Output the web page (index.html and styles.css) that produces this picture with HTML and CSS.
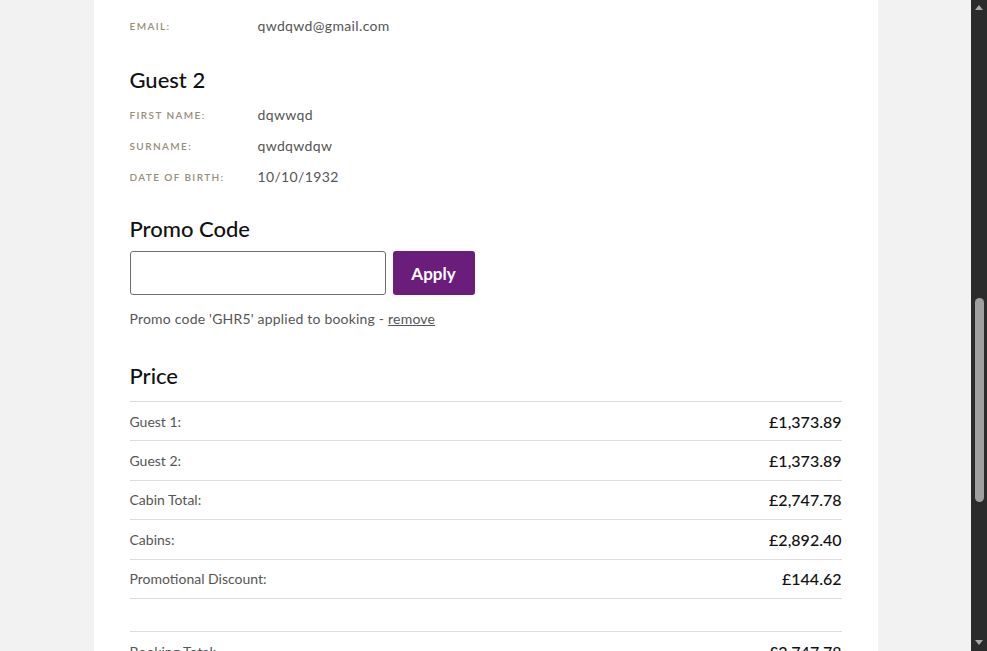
FILE: index.html
```html
<!DOCTYPE html>
<html lang="en">
<head>
<meta charset="utf-8">
<title>Booking summary</title>
<link rel="stylesheet" href="styles.css">
</head>
<body>
<div class="viewport">
  <main class="card">
    <section class="guest">
      <div class="detail"><span class="label">Telephone:</span><span class="value">0000700012</span></div>
      <div class="detail"><span class="label">Email:</span><span class="value">qwdqwd@gmail.com</span></div>
    </section>
    <section class="guest">
      <h2 class="heading">Guest 2</h2>
      <div class="detail"><span class="label">First name:</span><span class="value">dqwwqd</span></div>
      <div class="detail"><span class="label">Surname:</span><span class="value">qwdqwdqw</span></div>
      <div class="detail"><span class="label">Date of birth:</span><span class="value">10/10/1932</span></div>
    </section>
    <section class="promo">
      <h2 class="heading">Promo Code</h2>
      <form class="promo-form" onsubmit="return false">
        <input class="promo-input" type="text" aria-label="Promo code">
        <button class="promo-apply" type="submit">Apply</button>
      </form>
      <p class="promo-note">Promo code 'GHR5' applied to booking - <a href="#" class="promo-remove">remove</a></p>
    </section>
    <section class="price">
      <h2 class="heading price-heading">Price</h2>
      <div class="price-table">
        <div class="price-row"><span class="price-label">Guest 1:</span><span class="price-value">£1,373.89</span></div>
        <div class="price-row"><span class="price-label">Guest 2:</span><span class="price-value">£1,373.89</span></div>
        <div class="price-row"><span class="price-label">Cabin Total:</span><span class="price-value">£2,747.78</span></div>
        <div class="price-row"><span class="price-label">Cabins:</span><span class="price-value">£2,892.40</span></div>
        <div class="price-row"><span class="price-label">Promotional Discount:</span><span class="price-value">£144.62</span></div>
        <div class="price-spacer"></div>
        <div class="price-row"><span class="price-label">Booking Total:</span><span class="price-value">£2,747.78</span></div>
      </div>
    </section>
  </main>
</div>
<div class="scrollbar" aria-hidden="true">
  <span class="scroll-arrow up"></span>
  <span class="scroll-thumb"></span>
  <span class="scroll-arrow down"></span>
</div>
</body>
</html>
```
FILE: styles.css
```css
html, body {
  margin: 0;
  height: 100%;
  overflow: hidden;
}
body {
  background: #f2f2f2;
  font-family: "Lato", "Open Sans", sans-serif;
  color: #555;
}
.viewport {
  width: calc(100% - 16px);
  height: 100%;
  display: flex;
  justify-content: center;
}
.card {
  width: 784px;
  box-sizing: border-box;
  background: #fff;
  padding: 0 36px 40px;
  margin-top: -21px;
}
.heading {
  margin: 0;
  font-size: 22px;
  line-height: 24px;
  font-weight: 500;
  color: #111;
}
.guest .heading { margin-bottom: 7px; }
.guest + .guest { margin-top: 27px; }
.detail {
  display: grid;
  grid-template-columns: 128px 1fr;
  align-items: center;
  height: 31px;
}
.label {
  font-size: 10px;
  letter-spacing: 1.4px;
  text-transform: uppercase;
  color: #958e78;
  font-weight: 600;
}
.value {
  font-size: 14px;
  letter-spacing: 0.35px;
  color: #555;
}
.promo { margin-top: 25px; }
.promo-form {
  display: flex;
  gap: 7px;
  margin-top: 10px;
}
.promo-input {
  width: 256px;
  height: 44px;
  box-sizing: border-box;
  border: 1px solid #6e6e6e;
  border-radius: 3px;
  margin: 0;
}
.promo-apply {
  width: 82px;
  height: 44px;
  border: 0;
  border-radius: 3px;
  background: #6a1d7b;
  color: #fff;
  font-family: inherit;
  font-size: 17px;
  font-weight: 700;
}
.promo-note {
  margin: 15px 0 0;
  font-size: 14px;
  line-height: 18px;
  letter-spacing: 0.2px;
  color: #555;
}
.promo-remove { color: #555; }
.price { margin-top: 36px; }
.price-heading { margin-bottom: 13px; }
.price-table { border-top: 1px solid #ddd; }
.price-row {
  display: flex;
  justify-content: space-between;
  align-items: center;
  height: 39.4px;
  box-sizing: border-box;
  border-bottom: 1px solid #ddd;
}
.price-spacer {
  height: 33px;
  box-sizing: border-box;
  border-bottom: 1px solid #ddd;
}
.price-label {
  font-size: 14px;
  color: #555;
}
.price-value {
  font-size: 16px;
  font-weight: 500;
  color: #111;
}
.scrollbar {
  position: fixed;
  top: 0;
  right: 0;
  width: 16px;
  height: 100%;
  background: #2b2b2b;
}
.scroll-thumb {
  position: absolute;
  left: 4px;
  top: 298px;
  width: 9px;
  height: 204px;
  border-radius: 5px;
  background: #a0a0a0;
}
.scroll-arrow {
  position: absolute;
  left: 4px;
  width: 0;
  height: 0;
  border-left: 4px solid transparent;
  border-right: 4px solid transparent;
}
.scroll-arrow.up { top: 5px; border-bottom: 5px solid #a8a8a8; }
.scroll-arrow.down { bottom: 6px; border-top: 5px solid #a8a8a8; }
```
